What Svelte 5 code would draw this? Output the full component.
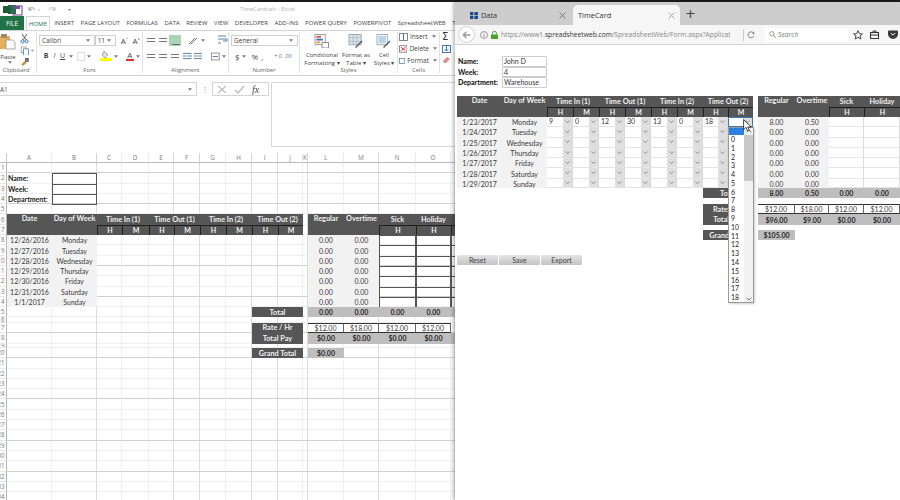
<script>
  const colW = [45,45,25,27,25,26,26,26,26,25,5,36,35,37,35,4];
  const colN = 'A,B,C,D,E,F,G,H,I,J,K,L,M,N,O,'.split(',');
  const darkCol = new Set([1,4,5,7,8,10,12]);
  const rowH = [];
  for (let i = 1; i <= 34; i++) {
    rowH.push(i === 15 ? 9.8 : i === 16 ? 6 : i === 17 ? 10 : i === 18 ? 11 : i === 19 ? 4 : 10.3);
  }
  const darkRow = new Set([1,4,10,13,17,20,24,28,31,34]);
  const sheetCols = '7px ' + colW.map((w) => w + 'px').join(' ');
  const sheetRows = '10px ' + rowH.map((h) => h + 'px').join(' ');

  const rows = rowH.map((_, i) => i + 1);
  const cols = colW.map((_, i) => i);

  const xDates = ['12/26/2016','12/27/2016','12/28/2016','12/29/2016','12/30/2016','12/31/2016','1/1/2017'];
  const days = ['Monday','Tuesday','Wednesday','Thursday','Friday','Saturday','Sunday'];
  const xl = [];
  const put = (r, c, rs, cs, text, cls) => xl.push({ r, c, rs, cs, text, cls });
  put(2,1,1,1,'Name:','lbl'); put(3,1,1,1,'Week:','lbl'); put(4,1,1,1,'Department:','lbl');
  [2,3,4].forEach((r) => put(r,2,1,1,'','box'));
  put(6,1,2,1,'Date','dark top'); put(6,2,2,1,'Day of Week','dark top');
  ['Time In (1)','Time Out (1)','Time In (2)','Time Out (2)'].forEach((t, i) => {
    put(6,3+i*2,1,2,t,'dark');
    put(7,3+i*2,1,1,'H','dark sub'); put(7,4+i*2,1,1,'M','dark sub');
  });
  put(6,12,2,1,'Regular','dark top'); put(6,13,2,1,'Overtime','dark top');
  put(6,14,1,1,'Sick','dark'); put(6,15,1,1,'Holiday','dark'); put(6,16,1,1,'','dark');
  put(7,14,1,1,'H','dark sub'); put(7,15,1,1,'H','dark sub'); put(7,16,1,1,'','dark sub');
  xDates.forEach((d, i) => {
    put(8+i,1,1,1,d,'pale'); put(8+i,2,1,1,days[i],'pale');
    put(8+i,12,1,1,'0.00','pale'); put(8+i,13,1,1,'0.00','pale');
    put(8+i,14,1,1,'','box'); put(8+i,15,1,1,'','box'); put(8+i,16,1,1,'','box noright');
  });
  put(15,9,1,2,'Total','dark');
  [12,13,14,15].forEach((c) => put(15,c,1,1,'0.00','tot'));
  put(15,16,1,1,'','tot');
  put(17,9,1,2,'Rate / Hr','dark'); put(18,9,1,2,'Total Pay','dark');
  ['$12.00','$18.00','$12.00','$12.00'].forEach((t, i) => put(17,12+i,1,1,t,'rate'));
  [12,13,14,15].forEach((c) => put(18,c,1,1,'$0.00','tot'));
  put(18,16,1,1,'','tot');
  put(20,9,1,2,'Grand Total','dark'); put(20,12,1,1,'$0.00','tot');

  const wDates = ['1/23/2017','1/24/2017','1/25/2017','1/26/2017','1/27/2017','1/28/2017','1/29/2017'];
  const first = ['9','0','12','30','13','0','18',''];
  const reg = ['8.00','0.00','0.00','0.00','0.00','0.00','0.00'];
  const ot = ['0.50','0.00','0.00','0.00','0.00','0.00','0.00'];
  const blanks = ['','','','','','','',''];
  const options = Array.from({ length: 19 }, (_, i) => String(i));
  const heads = ['Time In (1)','Time Out (1)','Time In (2)','Time Out (2)'];
</script>

{#snippet chev()}
  <svg class="chev" viewBox="0 0 6 4"><path d="M.6 .6 3 3 5.4 .6" fill="none" stroke="#666" stroke-width=".8"/></svg>
{/snippet}
{#snippet caret()}
  <svg class="caret" viewBox="0 0 5 3"><path d="M0 0h5L2.500 3z" fill="#777"/></svg>
{/snippet}

<div class="screen">
  <div class="topbar"></div>
  <div class="panes">
    <section class="excel">
      <div class="xl-title">
        <svg class="q" viewBox="0 0 80 14" width="80" height="14">
          <rect x="9" y="3" width="8" height="9" fill="#1e7145"/><rect x="4" y="4" width="7" height="7" fill="#185c37"/>
          <rect x="14" y="4" width="9" height="9" fill="none" stroke="#7b4a8f" stroke-width="1.1"/><rect x="16" y="4" width="5" height="3" fill="#7b4a8f"/>
          <path d="M30 8c1-3 5-3 6 0M30 5v3h3" fill="none" stroke="#999" stroke-width="1"/>
          <path d="M39 8l2 0" stroke="#bbb"/>
          <path d="M56 8c-1-3-5-3-6 0M56 5v3h-3" fill="none" stroke="#bbb" stroke-width="1"/>
          <path d="M69 7h3l-1.500 2z" fill="#888"/>
        </svg>
        <span class="doc">TimeCardcalc - Excel</span>
      </div>
      <div class="xl-tabs">
        <span class="file">FILE</span>
        <span class="t on">HOME</span><span class="t">INSERT</span><span class="t">PAGE LAYOUT</span><span class="t">FORMULAS</span><span class="t">DATA</span><span class="t">REVIEW</span><span class="t">VIEW</span><span class="t">DEVELOPER</span><span class="t">ADD-INS</span><span class="t">POWER QUERY</span><span class="t">POWERPIVOT</span><span class="t">SpreadsheetWEB</span><span class="t">TE</span>
      </div>
      <div class="ribbon">
        <div class="grp g-clip">
          <div class="gbody clip">
            <div class="paste">
              <svg width="16" height="17" viewBox="0 0 16 17"><rect x="-3" y="3" width="13" height="13" fill="#e2b15f"/><rect x="1" y="1" width="6" height="4" fill="#9a8a6a"/><path d="M6 7h7l2 2v7H6z" fill="#fff" stroke="#888" stroke-width=".7"/></svg>
              <span>Paste</span>
              {@render caret()}
            </div>
            <div class="small">
              <svg width="10" height="10" viewBox="0 0 10 10"><path d="M2 0l4 6M7 0L3 6" stroke="#555" fill="none"/><circle cx="2.400" cy="7.600" r="1.600" fill="none" stroke="#2e6ca8"/><circle cx="6.600" cy="7.600" r="1.600" fill="none" stroke="#2e6ca8"/></svg>
              <svg width="14" height="10" viewBox="0 0 14 10"><rect x="1" y="1" width="5" height="6" fill="#fff" stroke="#888" stroke-width=".7"/><rect x="3.500" y="3" width="5" height="6.500" fill="#fff" stroke="#2e6ca8" stroke-width=".7"/><path d="M11 4h3l-1.500 2z" fill="#888"/></svg>
              <svg width="10" height="10" viewBox="0 0 10 10"><path d="M1 8l4-4 2 2-4 3z" fill="#c9923e"/><rect x="5" y="1" width="4" height="4" fill="#6e6e6e"/></svg>
            </div>
          </div>
          <span class="glabel lc">Clipboard</span>
        </div>
        <div class="grp g-font">
          <div class="gbody col">
            <div class="line">
              <span class="sel w56">Calibri{@render caret()}</span>
              <span class="sel w21">11{@render caret()}</span>
              <span class="ic grow">A<sup>^</sup></span><span class="ic shrink">A<sup>˅</sup></span>
            </div>
            <div class="line second">
              <b class="ic b">B</b><i class="ic i">I</i><u class="ic u">U</u>{@render caret()}
              <span class="bordbox"></span>{@render caret()}
              <span class="ic fill">
                <svg width="12" height="11" viewBox="0 0 12 11"><path d="M4 1l4 4-3 3-3-3z" fill="#ddd" stroke="#777" stroke-width=".6"/><rect y="8" width="12" height="3" fill="#ffff00"/></svg>
              </span>{@render caret()}
              <span class="ic fcol">A<em></em></span>{@render caret()}
            </div>
          </div>
          <span class="glabel">Font</span>
        </div>
        <div class="grp g-align">
          <div class="gbody col">
            <div class="line">
              <span class="al"></span><span class="al"></span><span class="al picked"></span>
              <svg class="orient" width="11" height="9" viewBox="0 0 11 9"><path d="M1 8l6-6M3 8l6-6" stroke="#777" fill="none"/></svg>{@render caret()}
              <svg class="wrap" width="11" height="10" viewBox="0 0 11 10"><path d="M1 1h8M1 4h9v2H6M1 8h3" stroke="#5a7fa5" fill="none"/></svg>
            </div>
            <div class="line second">
              <span class="al"></span><span class="al"></span><span class="al"></span>
              <svg class="ind" width="10" height="8" viewBox="0 0 10 8"><path d="M0 1h10M5 4h5M0 7h10M4 4H0" stroke="#4a6f99" fill="none"/></svg>
              <svg class="ind" width="10" height="8" viewBox="0 0 10 8"><path d="M0 1h10M5 4h5M0 7h10M0 4h4" stroke="#4a6f99" fill="none"/></svg>
              <svg class="merge" width="10" height="9" viewBox="0 0 10 9"><rect x=".5" y=".5" width="9" height="8" fill="none" stroke="#888"/><path d="M2 4.500h6" stroke="#4a6f99"/></svg>{@render caret()}
            </div>
          </div>
          <span class="glabel">Alignment</span>
        </div>
        <div class="grp g-num">
          <div class="gbody col">
            <div class="line"><span class="sel w67">General{@render caret()}</span></div>
            <div class="line second nums">
              <span>$</span>{@render caret()}<span class="pct">%</span><span class="cma">,</span><span class="blu first">+.0</span><span class="blu">.00</span>
            </div>
          </div>
          <span class="glabel">Number</span>
        </div>
        <div class="grp g-sty">
          <div class="gbody big">
            <div class="bigb w38">
              <svg width="16" height="15" viewBox="0 0 16 15"><rect x=".5" y=".5" width="11" height="11" fill="#fff" stroke="#999"/><rect x="2" y="2" width="5" height="2" fill="#d9534f"/><rect x="2" y="5" width="7" height="2" fill="#3f78b5"/><rect x="2" y="8" width="4" height="2" fill="#e89b45"/><rect x="8" y="9" width="7" height="6" fill="#fff" stroke="#555" stroke-width=".7"/></svg>
              <span>Conditional<br>Formatting ▾</span>
            </div>
            <div class="bigb w32">
              <svg width="16" height="15" viewBox="0 0 16 15"><rect x=".5" y=".5" width="13" height="11" fill="#dbe5f1" stroke="#9aa"/><path d="M5 .5v11M9 .5v11M.5 4h13M.5 8h13" stroke="#9aa" stroke-width=".6"/><path d="M7 14l7-7 1 1-7 7z" fill="#556"/></svg>
              <span>Format as<br>Table ▾</span>
            </div>
            <div class="bigb w26">
              <svg width="16" height="15" viewBox="0 0 16 15"><rect x=".5" y=".5" width="11" height="11" fill="#fff" stroke="#9aa"/><rect x="2" y="2" width="8" height="8" fill="#bcd3ec"/><path d="M7 14l7-7 1 1-7 7z" fill="#556"/></svg>
              <span>Cell<br>Styles ▾</span>
            </div>
          </div>
          <span class="glabel">Styles</span>
        </div>
        <div class="grp g-cells">
          <div class="gbody col cellsb">
            <span><svg width="9" height="8" viewBox="0 0 9 8"><rect x=".5" y=".5" width="8" height="7" fill="#fff" stroke="#888"/><path d="M4.500 1v6" stroke="#3f78b5"/></svg>Insert {@render caret()}</span>
            <span><svg width="9" height="8" viewBox="0 0 9 8"><rect x=".5" y=".5" width="8" height="7" fill="#fff" stroke="#888"/><path d="M2 2l5 4M7 2L2 6" stroke="#c33"/></svg>Delete {@render caret()}</span>
            <span><svg width="9" height="8" viewBox="0 0 9 8"><rect x=".5" y=".5" width="8" height="7" fill="#fff" stroke="#3f78b5"/></svg>Format {@render caret()}</span>
          </div>
          <span class="glabel">Cells</span>
        </div>
        <div class="grp g-edit">
          <div class="gbody col edit">
            <span class="sigma">Σ</span>
            <svg width="9" height="8" viewBox="0 0 9 8"><rect x=".5" y=".5" width="8" height="7" fill="#fff" stroke="#3f78b5"/><path d="M4.500 1v5M2.500 4l2 2 2-2" stroke="#3f78b5" fill="none"/></svg>
            <svg width="9" height="8" viewBox="0 0 9 8"><path d="M1 5l4-4 3 2-4 4H2z" fill="#e08a8a"/></svg>
          </div>
        </div>
      </div>
      <div class="formula">
        <div class="namebox">A1{@render caret()}</div>
        <span class="dots">⋮</span>
        <div class="fxbox">
          <svg width="10" height="9" viewBox="0 0 10 9"><path d="M1 1l8 7M9 1L1 8" stroke="#bbb" fill="none" stroke-width="1.1"/></svg>
          <svg width="11" height="9" viewBox="0 0 11 9"><path d="M1 5l3 3 6-7" stroke="#bbb" fill="none" stroke-width="1.2"/></svg>
          <span class="fx">fx</span>
        </div>
        <div class="fbar"></div>
      </div>
      <div class="sheet" style:grid-template-columns={sheetCols} style:grid-template-rows={sheetRows}>
        <div class="corner"></div>
        {#each cols as c}
          <div class="ch" class:dk={darkCol.has(c)} style:grid-column={c + 2} style:grid-row="1">{colN[c]}</div>
        {/each}
        {#each rows as r}
          <div class="rh" style:grid-row={r + 1} style:grid-column="1"><span>{r}</span></div>
          {#each cols as c}
            <div class="gc" class:dkc={darkCol.has(c)} class:dkr={darkRow.has(r)} style:grid-row={r + 1} style:grid-column={c + 2}></div>
          {/each}
        {/each}
        {#each xl as it}
          <div class="item {it.cls}" style:grid-row="{it.r + 1} / span {it.rs}" style:grid-column="{it.c + 1} / span {it.cs}">{it.text}</div>
        {/each}
      </div>
    </section>

    <section class="browser">
      <div class="btabs">
        <div class="btab">
          <svg width="8" height="7" viewBox="0 0 8 7"><rect width="3.400" height="7" fill="#1d4e89"/><rect x="4.400" width="3.600" height="7" fill="#1d4e89"/><path d="M0 3.500h8" stroke="#cdcdcd" stroke-width=".7"/></svg>
          <span>Data</span>
          <svg class="x" width="7" height="7" viewBox="0 0 7 7"><path d="M.5.5l6 6M6.500.5l-6 6" stroke="#666" stroke-width=".8"/></svg>
        </div>
        <div class="btab active">
          <span>TimeCard</span>
          <svg class="x" width="7" height="7" viewBox="0 0 7 7"><path d="M.5.5l6 6M6.500.5l-6 6" stroke="#999" stroke-width=".8"/></svg>
        </div>
        <span class="plus">+</span>
      </div>
      <div class="toolbar">
        <span class="back"><svg width="9" height="8" viewBox="0 0 9 8"><path d="M8.500 4H1.500M4.500 .8 1.200 4l3.300 3.200" fill="none" stroke="#999" stroke-width="1.3"/></svg></span>
        <svg class="info" width="8" height="8" viewBox="0 0 8 8"><circle cx="4" cy="4" r="3.500" fill="none" stroke="#777" stroke-width=".7"/><path d="M4 3.400v2.800M4 1.800v.8" stroke="#777" stroke-width=".8"/></svg>
        <svg class="lock" width="7" height="8" viewBox="0 0 7 8"><rect y="3.400" width="7" height="4.600" rx=".6" fill="#4aa02c"/><path d="M1.600 3.600V2.200a1.900 1.900 0 0 1 3.800 0v1.400" fill="none" stroke="#4aa02c"/></svg>
        <div class="url"><span class="g">https://www1.</span>spreadsheetweb.com<span class="g">/SpreadsheetWeb/Form.aspx?Applicat</span></div>
        <span class="vsep"></span>
        <svg class="reload" width="8" height="8" viewBox="0 0 8 8"><path d="M6.600 2.200A3 3 0 1 0 7 4.600" fill="none" stroke="#666" stroke-width=".8"/><path d="M7.200.8v2.200H5z" fill="#666"/></svg>
        <div class="search">
          <svg width="7" height="7" viewBox="0 0 7 7"><circle cx="2.800" cy="2.800" r="2.200" fill="none" stroke="#777" stroke-width=".7"/><path d="M4.400 4.400 6.800 6.800" stroke="#777" stroke-width=".8"/></svg>
          <i>Search</i>
        </div>
        <svg class="tool t1" width="10" height="10" viewBox="0 0 10 10"><path d="M5 .7l1.300 2.900 3.100.3-2.400 2 .8 3.100L5 7.400 2.200 9l.8-3.100-2.400-2 3.100-.3z" fill="none" stroke="#333" stroke-width=".9"/></svg>
        <svg class="tool t2" width="9" height="9" viewBox="0 0 9 9"><rect x=".5" y="2.500" width="8" height="6" fill="none" stroke="#333"/><path d="M3 2.500V1h3v1.500M.5 5h8" stroke="#333" fill="none"/></svg>
        <svg class="tool t3" width="10" height="9" viewBox="0 0 10 9"><path d="M0 1.500a1 1 0 0 1 1-1h8a1 1 0 0 1 1 1V4a5 5 0 0 1-10 0z" fill="#3a3a3a"/><path d="M2.800 3 5 5.200 7.200 3" fill="none" stroke="#fff"/></svg>
      </div>
      <div class="page">
        <div class="who">
          <b>Name:</b><span class="inp">John D</span>
          <b>Week:</b><span class="inp">4</span>
          <b>Department:</b><span class="inp">Warehouse</span>
        </div>
        <div class="wtable">
          <div class="dark wtop" style:grid-column="1" style:grid-row="1 / span 2">Date</div>
          <div class="dark wtop" style:grid-column="2" style:grid-row="1 / span 2">Day of Week</div>
          {#each heads as h, i}
            <div class="dark" style:grid-column="{3 + i * 2} / span 2" style:grid-row="1">{h}</div>
            <div class="dark sub" style:grid-column={3 + i * 2} style:grid-row="2">H</div>
            <div class="dark sub" style:grid-column={4 + i * 2} style:grid-row="2">M</div>
          {/each}
          <div class="dark wtop" style:grid-column="12" style:grid-row="1 / span 2">Regular</div>
          <div class="dark wtop" style:grid-column="13" style:grid-row="1 / span 2">Overtime</div>
          <div class="dark" style:grid-column="14" style:grid-row="1">Sick</div>
          <div class="dark" style:grid-column="15" style:grid-row="1">Holiday</div>
          <div class="dark sub" style:grid-column="14" style:grid-row="2">H</div>
          <div class="dark sub" style:grid-column="15" style:grid-row="2">H</div>

          {#each wDates as d, r}
            <div class="pale" style:grid-column="1" style:grid-row={r + 3}>{d}</div>
            <div class="pale" style:grid-column="2" style:grid-row={r + 3}>{days[r]}</div>
            {#each r === 0 ? first : blanks as v, c}
              <div class="select" class:open={r === 0 && c === 7} style:grid-column={c + 3} style:grid-row={r + 3}>
                <span class="val">{v}</span>
                <span class="arrow">{@render chev()}</span>
                {#if r === 0 && c === 7}
                  <div class="drop">
                    <div class="opts">
                      <div class="hl"></div>
                      {#each options as o}<div class="opt">{o}</div>{/each}
                    </div>
                    <div class="scroll">
                      <svg width="6" height="4" viewBox="0 0 6 4"><path d="M.6 3.400 3 1l2.400 2.400" fill="none" stroke="#555" stroke-width=".8"/></svg>
                      <div class="thumb"></div>
                      <svg class="dn" width="6" height="4" viewBox="0 0 6 4"><path d="M.6 .6 3 3l2.400-2.400" fill="none" stroke="#555" stroke-width=".8"/></svg>
                    </div>
                  </div>
                  <svg class="cursor" width="9" height="13" viewBox="0 0 9 13"><path d="M.6.6v10l2.400-2.200 1.600 3.600 1.700-.8L4.700 8h3.400z" fill="#fff" stroke="#222" stroke-width=".8"/></svg>
                {/if}
              </div>
            {/each}
            <div class="pale" style:grid-column="12" style:grid-row={r + 3}>{reg[r]}</div>
            <div class="pale" style:grid-column="13" style:grid-row={r + 3}>{ot[r]}</div>
            <div class="wcell" style:grid-column="14" style:grid-row={r + 3}></div>
            <div class="wcell" style:grid-column="15" style:grid-row={r + 3}></div>
          {/each}

          <div class="dark" style:grid-column="9 / span 2" style:grid-row="10">Total</div>
          <div class="dark" style:grid-column="9 / span 2" style:grid-row="12">Rate / Hr</div>
          <div class="dark" style:grid-column="9 / span 2" style:grid-row="13">Total Pay</div>
          <div class="dark" style:grid-column="9 / span 2" style:grid-row="15">Grand Total</div>
          {#each ['8.00','0.50','0.00','0.00'] as v, i}
            <div class="tot" style:grid-column={12 + i} style:grid-row="10">{v}</div>
          {/each}
          {#each ['$12.00','$18.00','$12.00','$12.00'] as v, i}
            <div class="rate" style:grid-column={12 + i} style:grid-row="12">{v}</div>
          {/each}
          {#each ['$96.00','$9.00','$0.00','$0.00'] as v, i}
            <div class="tot" style:grid-column={12 + i} style:grid-row="13">{v}</div>
          {/each}
          <div class="tot" style:grid-column="12" style:grid-row="15">$105.00</div>
        </div>
        <div class="btns"><button>Reset</button><button>Save</button><button>Export</button></div>
      </div>
    </section>
  </div>
</div>

<style>
  :global(body) { margin: 0; background: #fff; }
  .screen { width: 900px; height: 500px; overflow: hidden; display: flex; flex-direction: column; font-family: "Lato", "Open Sans", sans-serif; color: #333; background: #fff; }
  .topbar { height: 2px; background: #1a1a1a; flex: none; }
  .panes { flex: 1; display: flex; min-height: 0; }
  .excel { width: 455px; flex: none; overflow: hidden; display: flex; flex-direction: column; }
  .browser { flex: 1; min-width: 0; display: flex; flex-direction: column; box-shadow: -2px 0 3px rgba(0,0,0,.25); z-index: 1; background: #fff; overflow: hidden; }

  /* Excel chrome */
  .xl-title { height: 14px; flex: none; display: flex; align-items: center; }
  .q { flex: none; margin-left: -1px; }
  .doc { margin-left: 161px; font: 5.8px "Open Sans", sans-serif; color: #b0b0b0; }
  .xl-tabs { height: 14px; flex: none; display: flex; align-items: stretch; font: 6px "Open Sans", sans-serif; color: #444; white-space: nowrap; }
  .file { width: 24px; flex: none; background: #217346; color: #fff; display: flex; align-items: center; justify-content: center; font-size: 6.5px; margin-right: 2px; }
  .t { padding: 0 3.3px; display: flex; align-items: center; flex: none; }
  .t.on { color: #217346; border: 1px solid #d4d4d4; border-bottom: 0; padding: 0 2px; margin-right: 1px; }
  .ribbon { height: 46px; flex: none; display: flex; border-top: 1px solid #d4d4d4; border-bottom: 1px solid #d4d4d4; box-sizing: border-box; font: 6.5px "Open Sans", sans-serif; color: #444; }
  .grp { display: flex; flex-direction: column; border-right: 1px solid #e2e2e2; box-sizing: border-box; margin: 1px 0 2px; flex: none; overflow: hidden; }
  .gbody { height: 35px; flex: none; }
  .glabel { text-align: center; font-size: 6px; color: #666; line-height: 7px; }
  .lc { margin-left: -4px; }
  .g-clip { width: 37px; } .g-font { width: 106px; } .g-align { width: 86px; } .g-num { width: 71px; } .g-sty { width: 98px; } .g-cells { width: 42px; } .g-edit { flex: 1; border: 0; }
  .clip { display: flex; }
  .paste { width: 19px; flex: none; display: flex; flex-direction: column; align-items: center; font-size: 6px; }
  .paste svg:first-child { margin-top: 1px; margin-left: -3px; }
  .paste span { line-height: 8px; margin-top: 3px; margin-left: -3px; }
  .small { display: flex; flex-direction: column; gap: 2px; padding: 2px 0 0 1px; }
  .col { display: flex; flex-direction: column; }
  .line { display: flex; align-items: center; height: 12px; margin-top: 2px; padding-left: 2px; }
  .second { margin-top: 4px; }
  .sel { box-sizing: border-box; height: 11px; border: 1px solid #cfcfcf; display: flex; align-items: center; justify-content: space-between; padding: 0 2px; font-size: 6.5px; background: #fff; }
  .w56 { width: 57px; } .w21 { width: 21px; margin-right: 3px; } .w67 { width: 67px; }
  .ic { font-size: 8px; line-height: 10px; width: 12px; text-align: center; font-style: normal; text-decoration: none; color: #444; }
  .ic sup { font-size: 4px; }
  .second .ic { width: 11px; }
  .b { margin-left: 3px; font-size: 7px; } .i { font-style: italic; font-size: 7px; } .u { text-decoration: underline; font-size: 7px; }
  .caret { width: 4px; height: 3px; flex: none; margin: 0 2px; }
  .bordbox { width: 10px; height: 9px; border: 1px solid #ddd; box-sizing: border-box; margin-left: 2px; }
  .fill { margin-left: 7px; width: 13px !important; } .fcol { margin-left: 6px; font-size: 8px; line-height: 8px !important; height: 11px; }
  .fcol em { display: block; height: 2.500px; background: #e03030; }
  .al { width: 12px; height: 11px; flex: none; display: flex; box-sizing: border-box; background: linear-gradient(#777,#777) 2px 3px / 8px 1px no-repeat, linear-gradient(#777,#777) 2px 6px / 8px 1px no-repeat; }
  .al.picked { background: linear-gradient(#6a6a6a,#6a6a6a) 2px 8px / 8px 1px no-repeat, #a7d5b6; border: 1px solid #a7d5b6; }
  .orient { margin-left: 7px; } .wrap { margin-left: 10px; }
  .ind { margin-left: 2px; }
  .merge { margin-left: 9px; }
  .nums { padding-left: 6px; font-size: 8px; }
  .pct { margin-left: 4px; } .cma { margin-left: 3px; }
  .blu { font-size: 5.5px; color: #4a6f99; margin-left: 2px; } .blu.first { margin-left: 11px; }
  .big { display: flex; padding-left: 3px; gap: 0; }
  .bigb { display: flex; flex-direction: column; align-items: center; text-align: center; font-size: 6px; line-height: 8px; flex: none; padding-top: 2px; }
  .bigb span { margin-top: 3px; white-space: nowrap; }
  .w38 { width: 38px; } .w32 { width: 30px; } .w26 { width: 26px; }
  .cellsb { gap: 3px; padding: 0 0 0 1px; font-size: 6.5px; line-height: 9px; }
  .cellsb span { display: flex; align-items: center; gap: 2px; white-space: nowrap; }
  .edit { gap: 3px; padding-left: 2px; }
  .sigma { font: 10px/10px "DejaVu Sans", sans-serif; color: #333; }

  .formula { height: 64.500px; flex: none; margin: 6px 0 6.500px; display: flex; align-items: flex-start; }
  .namebox { width: 197px; height: 14px; box-sizing: border-box; border: 1px solid #d4d4d4; border-left: 0; display: flex; align-items: center; justify-content: space-between; font: 6.5px "Open Sans", sans-serif; color: #555; padding-right: 2px; flex: none; }
  .dots { width: 15px; text-align: center; font-size: 8px; line-height: 14px; color: #999; flex: none; }
  .fxbox { width: 57px; height: 14px; box-sizing: border-box; border: 1px solid #d4d4d4; display: flex; align-items: center; gap: 7px; padding-left: 4px; flex: none; }
  .fx { font: italic 10px "Liberation Serif", serif; color: #444; }
  .fbar { margin-left: 2px; flex: 1; height: 100%; box-sizing: border-box; border: 1px solid #d8d8d8; border-right: 0; }

  .sheet { display: grid; flex: none; font-size: 7px; }
  .corner { grid-row: 1; grid-column: 1; border-right: 1px solid #c8c8c8; border-bottom: 1px solid #b8b8b8; box-sizing: border-box; }
  .ch { font: 6.2px/9px "Open Sans", sans-serif; color: #777; text-align: center; border-bottom: 1px solid #b8b8b8; border-right: 1px solid #eaeaea; box-sizing: border-box; min-width: 0; overflow: hidden; }
  .ch.dk { border-right-color: #d4d4d4; }
  .rh { border-right: 1.500px solid #b5b5b5; border-bottom: 1px solid #e6e6e6; box-sizing: border-box; display: flex; justify-content: flex-end; align-items: center; overflow: hidden; font: 6.2px "Open Sans", sans-serif; color: #777; padding-right: 1.500px; min-width: 0; min-height: 0; }
  .rh span { flex: none; }
  .gc { border-right: 1px solid #efefef; border-bottom: 1px solid #efefef; box-sizing: border-box; min-height: 0; min-width: 0; }
  .gc.dkc { border-right-color: #dcdcdc; }
  .gc.dkr { border-bottom-color: #cfcfcf; }
  .item { display: flex; align-items: center; justify-content: center; white-space: nowrap; min-width: 0; min-height: 0; overflow: hidden; box-sizing: border-box; color: #3a3a3a; }
  .lbl { font-weight: 700; justify-content: flex-start; padding-left: 1px; overflow: visible; color: #222; }
  .box { border: 1px solid #555; margin: 0 0 -1px 0; }
  .noright { border-right: 0; }
  .dark { background: #565656; color: #f0f0f0; font-weight: 700; font-size: 7.3px; display: flex; align-items: center; justify-content: center; white-space: nowrap; min-width: 0; min-height: 0; overflow: hidden; box-sizing: border-box; }
  .dark.top { align-items: flex-start; line-height: 10px; }
  .wtop { align-items: flex-start; line-height: 10px; }
  .dark.sub { border-left: 1px solid #1f1f1f; border-top: 1px solid #1f1f1f; font-size: 7px; }
  .pale { background: #f2f2f2; display: flex; align-items: center; justify-content: center; white-space: nowrap; color: #3a3a3a; }
  .tot { background: #bebebe; font-weight: 700; color: #2a2a2a; display: flex; align-items: center; justify-content: center; white-space: nowrap; min-height: 0; }
  .rate { border-top: 1px solid #333; border-bottom: 1px solid #333; border-right: 1px solid #666; display: flex; align-items: center; justify-content: center; box-sizing: border-box; color: #3a3a3a; background: #fff; }

  /* Browser */
  .btabs { height: 23px; flex: none; background: #cdcdcd; display: flex; align-items: stretch; font: 7.4px "Open Sans", sans-serif; color: #333; }
  .btab { width: 96px; margin-left: 15px; display: flex; align-items: center; gap: 3px; padding-top: 3px; box-sizing: border-box; }
  .btab .x { margin-left: auto; margin-right: 0; }
  .btab.active { background: #f6f6f6; border-radius: 5px 5px 0 0; width: 107px; margin: 3px 0 0 7px; padding: 0 5px; }
  .plus { font: 13px/23px "DejaVu Sans", sans-serif; color: #444; margin-left: 5px; }
  .toolbar { height: 20px; box-sizing: border-box; flex: none; background: #f6f6f6; border-bottom: 1px solid #d2d2d2; display: flex; align-items: center; padding-left: 3px; }
  .back { width: 17px; height: 17px; box-sizing: border-box; border: 1px solid #d2d2d2; border-radius: 50%; background: #fdfdfd; display: flex; align-items: center; justify-content: center; flex: none; }
  .info { margin-left: 5px; flex: none; } .lock { margin-left: 3px; flex: none; }
  .url { width: 229px; margin-left: 3px; font: 6.7px "Open Sans", sans-serif; color: #333; white-space: nowrap; overflow: hidden; flex: none; }
  .url .g { color: #888; }
  .vsep { width: 1px; height: 12px; background: #ccc; margin-left: 13px; flex: none; }
  .reload { margin-left: 3px; flex: none; }
  .search { width: 83px; height: 14px; margin-left: 10px; background: #fff; display: flex; align-items: center; gap: 2px; padding-left: 4px; box-sizing: border-box; font: 6.8px "Open Sans", sans-serif; color: #777; flex: none; }
  .tool { flex: none; }
  .t1 { margin-left: 5px; } .t2 { margin-left: 7px; } .t3 { margin-left: 9px; }
  .page { flex: 1; min-height: 0; font-size: 7px; padding: 11px 0 0 3px; }
  .who { display: grid; grid-template-columns: 44px 45px; grid-auto-rows: 10.500px; align-items: center; font-weight: 700; color: #222; white-space: nowrap; }
  .inp { font-weight: 400; height: 10.500px; box-sizing: border-box; border: 1px solid #ccc; border-radius: 1px; padding-left: 1px; line-height: 8.500px; color: #333; }
  .wtable { display: grid; margin: 8.500px 0 0 -1px; grid-template-columns: 45px 45px 26px 26px 26px 26px 26px 26px 25px 25px 5px 37px 34px 35px 36px; grid-template-rows: 10.500px 10.500px 10.300px 10.300px 10.300px 10.300px 10.300px 10.300px 9.500px 10px 6px 10px 10.500px 5.500px 10px; }
  .wcell { border-bottom: 1px solid #e6e6e6; border-right: 1px solid #ddd; box-sizing: border-box; }
  .select { display: flex; border-bottom: 1px solid #e3e3e3; border-right: 1px solid #d8d8d8; box-sizing: border-box; min-width: 0; min-height: 0; position: relative; font-size: 7px; }
  .val { flex: 1; padding-left: 2px; line-height: 9px; min-width: 0; }
  .arrow { width: 9px; background: #dedede; display: flex; align-items: center; justify-content: center; flex: none; }
  .chev { width: 5px; height: 3.500px; }
  .select.open { border: 1px solid #3b78b5; }
  .drop { position: absolute; left: -1px; top: 9px; width: 26px; height: 176px; background: #fff; border: 1px solid #9a9a9a; box-sizing: border-box; display: flex; z-index: 3; box-shadow: 1px 1px 2px rgba(0,0,0,.2); }
  .opts { flex: 1; min-width: 0; }
  .hl { height: 7px; background: #2a7fe0; }
  .opt { height: 8.790px; line-height: 8.790px; padding-left: 2px; font-size: 7px; color: #222; }
  .scroll { width: 9px; background: #f1f1f1; flex: none; display: flex; flex-direction: column; align-items: center; padding-top: 1px; box-sizing: border-box; }
  .thumb { width: 100%; height: 46px; background: #c8c8c8; margin-top: 2px; }
  .dn { margin-top: auto; margin-bottom: 1px; }
  .cursor { position: absolute; left: 14px; top: 1px; z-index: 4; }
  .btns { display: flex; gap: 1px; margin: 15px 0 0 -1px; }
  .btns button { width: 41px; height: 10px; padding: 0; border: 0; border-radius: 1px; background: linear-gradient(#e4e4e4, #c4c4c4); font: 7px/10px "Lato", sans-serif; color: #444; }
</style>
